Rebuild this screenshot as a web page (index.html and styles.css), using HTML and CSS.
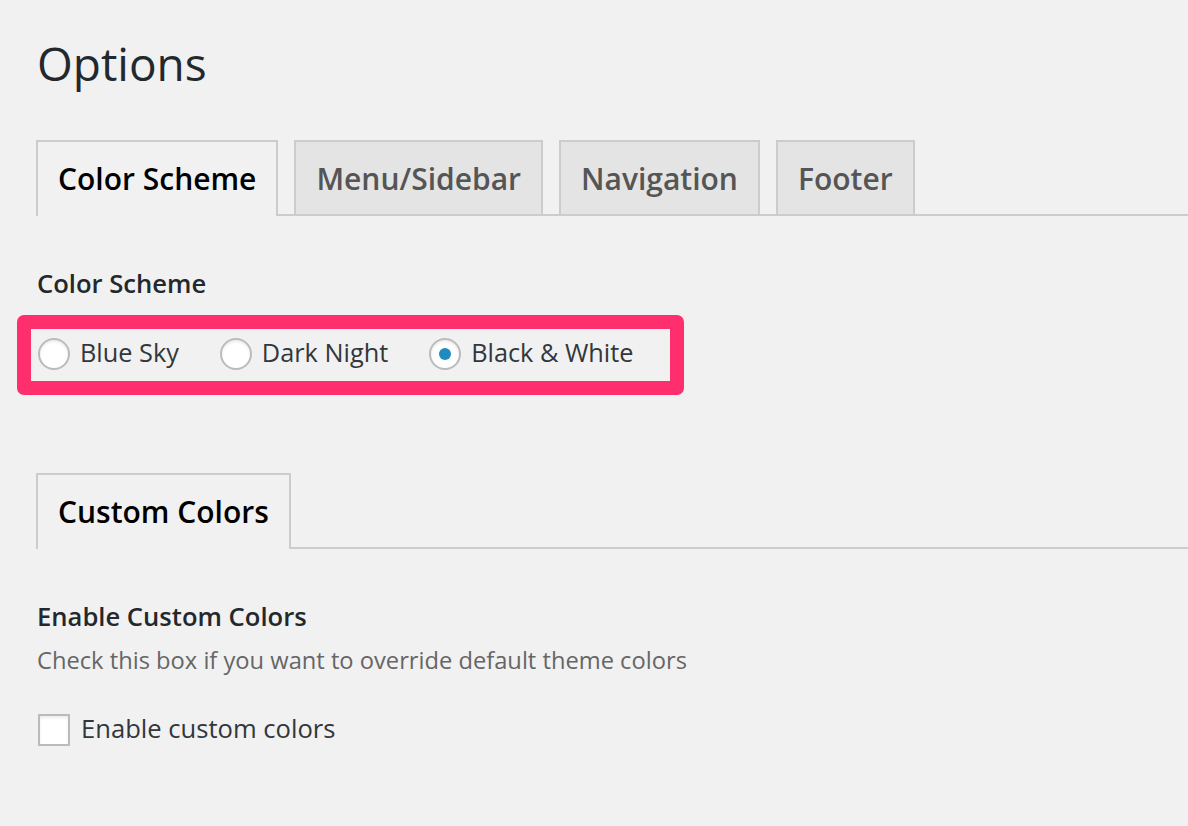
FILE: index.html
```html
<!DOCTYPE html>
<html>
<head>
<meta charset="utf-8">
<link rel="stylesheet" href="styles.css">
</head>
<body>
<div class="page">
  <h1 class="title">Options</h1>
  <div class="tabs">
    <div class="tab active">Color Scheme</div>
    <div class="tab">Menu/Sidebar</div>
    <div class="tab">Navigation</div>
    <div class="tab">Footer</div>
  </div>
  <div class="section">
    <div class="field-label">Color Scheme</div>
    <div class="highlight">
      <label class="choice"><span class="radio"></span><span class="choice-text">Blue Sky</span></label>
      <label class="choice"><span class="radio"></span><span class="choice-text">Dark Night</span></label>
      <label class="choice"><span class="radio checked"></span><span class="choice-text">Black &amp; White</span></label>
    </div>
  </div>
  <div class="tabs tabs-second">
    <div class="tab active">Custom Colors</div>
  </div>
  <div class="section section-second">
    <div class="field-label">Enable Custom Colors</div>
    <div class="description">Check this box if you want to override default theme colors</div>
    <label class="choice check-row"><span class="checkbox"></span><span class="choice-text">Enable custom colors</span></label>
  </div>
</div>
</body>
</html>
```
FILE: styles.css
```css
html, body {
  margin: 0;
  padding: 0;
  background: #f1f1f1;
}
body {
  font-family: "Open Sans", "Liberation Sans", sans-serif;
  color: #333;
  width: 1188px;
  height: 826px;
  overflow: hidden;
}
.page {
  padding: 0 0 0 36px;
}
.title {
  margin: 0;
  padding-top: 34px;
  font-size: 46px;
  font-weight: 400;
  line-height: 58px;
  color: #23282d;
  padding-left: 1px;
}
.tabs {
  display: flex;
  align-items: flex-end;
  margin-top: 48px;
  border-bottom: 2px solid #ccc;
}
.tab {
  height: 72px;
  line-height: 74px;
  padding: 0 20px;
  border: 2px solid #ccc;
  border-bottom: none;
  margin-bottom: 0;
  background: #e4e4e4;
  color: #555;
  font-size: 30px;
  font-weight: 600;
  margin-right: 16px;
  white-space: nowrap;
  position: relative;
}
.tab.active {
  background: #f1f1f1;
  color: #000;
  height: 74px;
  margin-bottom: -2px;
  line-height: 74px;
}
.section {
  padding-top: 50px;
}
.field-label {
  font-size: 25.6px;
  font-weight: 600;
  color: #23282d;
  line-height: 36px;
  padding-left: 1px;
}
.highlight {
  display: inline-flex;
  align-items: center;
  margin-left: -19px;
  margin-top: 13px;
  border: 14px solid #ff2e6c;
  border-radius: 7px;
  padding: 7px 37px 9px 7px;
}
.choice {
  display: inline-flex;
  align-items: center;
  margin-right: 41px;
}
.choice:last-child {
  margin-right: 0;
}
.radio {
  width: 28px;
  height: 28px;
  border: 2px solid #bbb;
  border-radius: 50%;
  background: #fff;
  box-shadow: inset 0 2px 3px rgba(0,0,0,0.08);
  position: relative;
  flex: none;
}
.radio.checked::after {
  content: "";
  position: absolute;
  left: 8px;
  top: 8px;
  width: 12px;
  height: 12px;
  border-radius: 50%;
  background: #1e8cbe;
}
.choice-text {
  margin-left: 10px;
  font-size: 25.3px;
  line-height: 36px;
  color: #32373c;
  position: relative;
  top: -2px;
}
.tabs-second {
  margin-top: 78px;
}
.section-second {
  padding-top: 50px;
}
.description {
  margin-top: 7px;
  font-size: 23.7px;
  line-height: 36px;
  color: #666;
  padding-left: 1px;
}
.check-row {
  margin-top: 34px;
  margin-left: 2px;
}
.check-row .choice-text {
  font-size: 25.6px;
  margin-left: 11px;
  top: -1px;
}
.checkbox {
  width: 28px;
  height: 28px;
  border: 2px solid #bbb;
  background: #fff;
  box-shadow: inset 0 2px 3px rgba(0,0,0,0.08);
  flex: none;
}
```
